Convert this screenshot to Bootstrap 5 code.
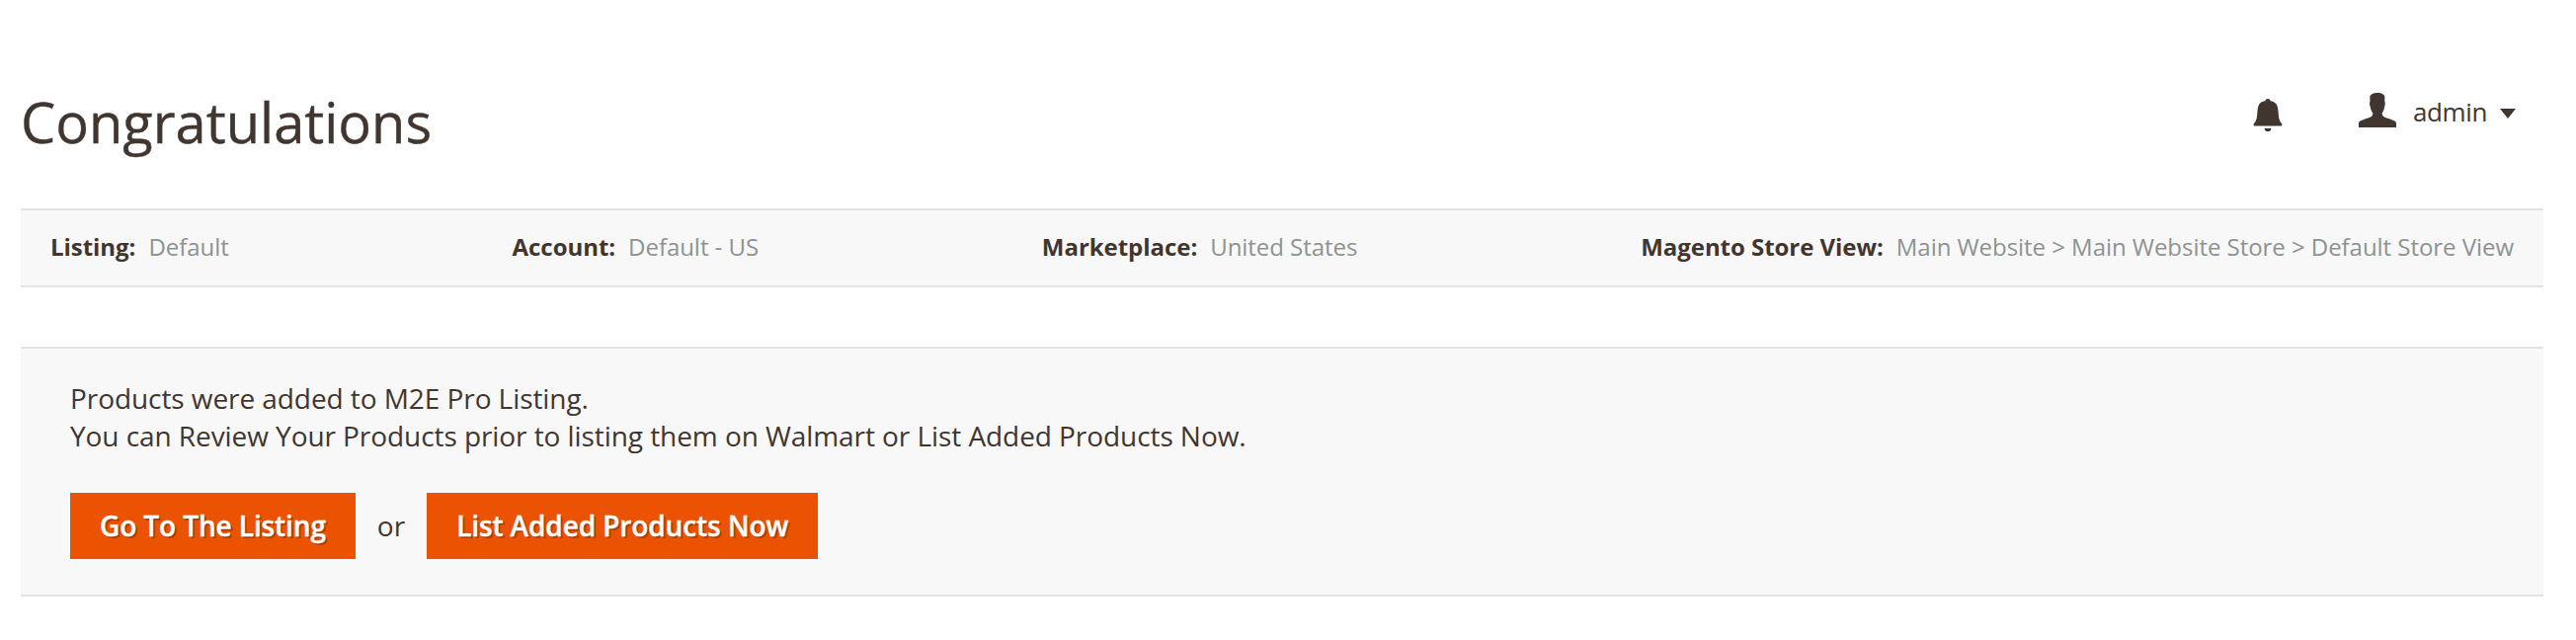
<!DOCTYPE html>
<html lang="en">
<head>
<meta charset="utf-8">
<title>Congratulations</title>
<link href="https://cdn.jsdelivr.net/npm/bootstrap@5.3.0/dist/css/bootstrap.min.css" rel="stylesheet">
<style>
body{font-family:"Open Sans","Noto Sans",sans-serif;font-size:28px;line-height:38px;color:#41362f;background:#fff}
.page-shell{padding:85px 33px 0 21px}
.page-top{height:126px}
.page-title{font-size:56px;line-height:76px;font-weight:400;-webkit-text-stroke:.4px}
.user-tools{padding:9px 28px 0 0}
.tool-bell{width:30px;height:35px;margin:5px 77px 0 0}
.tool-user{width:38px;height:35px}
.user-name{font-size:26px;line-height:36px;margin-left:17px;margin-top:1px;width:74px;letter-spacing:-.4px}
.user-caret{width:16px;height:10px;margin:16px 0 0 14px}
.panel{background:#f8f8f8;border-top:2px solid #e3e3e3;border-bottom:2px solid #e3e3e3}
.info-bar{height:80px;padding:0 30px 2px;font-size:24px;line-height:32px;letter-spacing:-.045px}
.info-bar b{font-weight:700;margin-right:13px}
.info-bar span{color:#8c9391}
.result{margin-top:60px;height:253px;padding:31px 50px 0}
.result-text{letter-spacing:-.07px}
.action-row{margin-top:39px}
.btn-action{--bs-btn-color:#fff;--bs-btn-bg:#eb5202;--bs-btn-hover-bg:#ba4000;--bs-btn-hover-color:#fff;--bs-btn-border-width:0;--bs-btn-border-radius:0;--bs-btn-font-weight:600;--bs-btn-font-size:28px;--bs-btn-line-height:38px;--bs-btn-padding-x:30px;--bs-btn-padding-y:0;height:67px;padding-bottom:2px;letter-spacing:-.11px;-webkit-text-stroke:.4px;text-shadow:2px 2px 0 rgba(0,0,0,.25)}
.or-word{margin:0 22px;padding-bottom:1px}
</style>
</head>
<body>
<main class="page-shell">
<header class="page-top d-flex justify-content-between align-items-start">
<h1 class="page-title m-0">Congratulations</h1>
<div class="user-tools d-flex align-items-start">
<svg class="tool-bell" viewBox="0 0 30 35" fill="#41362f"><path d="M12.5 3.2C12.5.2 17.5.2 17.5 3.2 22.800 3.800 24.800 7 25.300 11.500L26 19C26.400 22.500 27.500 24.500 29.300 26.300V28.500H.7V26.300C2.500 24.500 3.600 22.500 4 19L4.700 11.500C5.200 7 7.200 3.800 12.500 3.200ZM11.500 31H18.500C18.300 33.200 16.800 34.200 15 34.200S11.700 33.200 11.500 31Z"/></svg>
<svg class="tool-user" viewBox="0 0 38 35" fill="#41362f"><path d="M11.300 4C11.800 1.500 15 0 19 0S26 1.500 26.300 4V8.500C27 9.200 26.800 13 26 14.500 25.600 17.500 24.500 19.500 23.700 20.500 23.700 24 25.500 24.300 30 26 35 27.800 38 28.300 38 31V35H0V31C0 28.300 3 27.800 8 26 12.500 24.300 14.300 24 14.300 20.500 13.500 19.500 12.200 17.500 11.900 14.500 11 13 10.800 9.200 11.500 8.500Z"/></svg>
<span class="user-name">admin</span>
<svg class="user-caret" viewBox="0 0 16 10" fill="#41362f"><path d="M0 0H16L8 10Z"/></svg>
</div>
</header>
<section class="panel info-bar d-flex justify-content-between align-items-center">
<div><b>Listing:</b><span>Default</span></div>
<div><b>Account:</b><span>Default - US</span></div>
<div><b>Marketplace:</b><span>United States</span></div>
<div><b>Magento Store View:</b><span>Main Website &gt; Main Website Store &gt; Default Store View</span></div>
</section>
<section class="panel result">
<p class="result-text m-0">Products were added to M2E Pro Listing.<br>You can Review Your Products prior to listing them on Walmart or List Added Products Now.</p>
<div class="action-row d-flex align-items-center">
<button type="button" class="btn btn-action">Go To The Listing</button>
<span class="or-word">or</span>
<button type="button" class="btn btn-action">List Added Products Now</button>
</div>
</section>
</main>
<script src="https://cdn.jsdelivr.net/npm/bootstrap@5.3.0/dist/js/bootstrap.bundle.min.js"></script>
</body>
</html>
